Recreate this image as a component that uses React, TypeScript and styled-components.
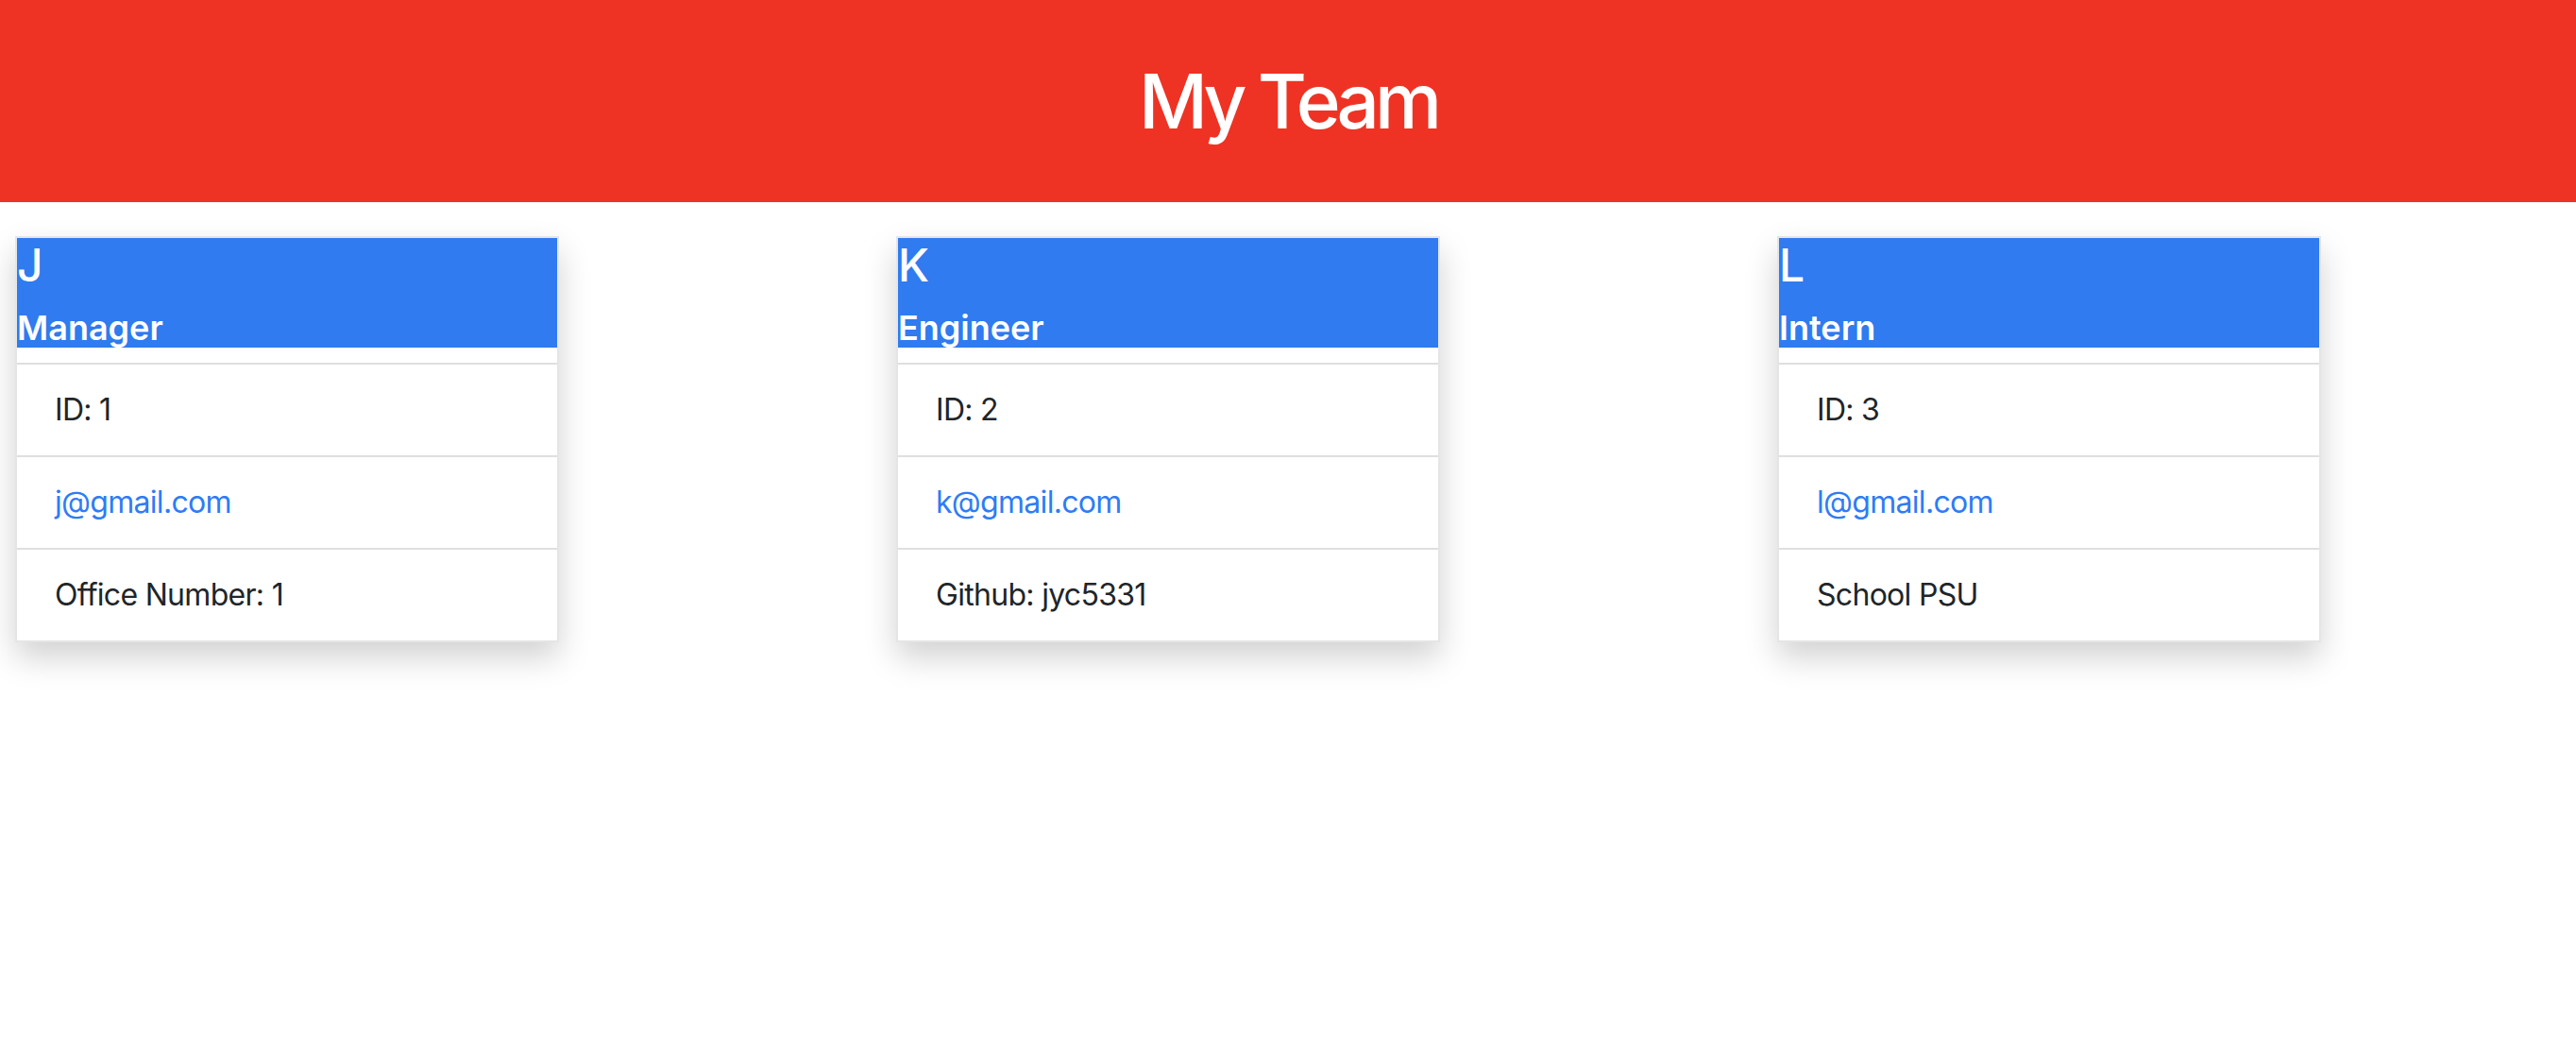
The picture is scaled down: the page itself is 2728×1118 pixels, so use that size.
import React from "react";
import styled, { createGlobalStyle } from "styled-components";

const GlobalStyle = createGlobalStyle`
  html, body {
    margin: 0;
    padding: 0;
    background: #ffffff;
  }
  body {
    font-family: Inter, "Noto Sans", "Liberation Sans", sans-serif;
    color: #212529;
  }
  * { box-sizing: border-box; }
`;

const Banner = styled.header`
  height: 214px;
  background: #ee3324;
  display: flex;
  align-items: center;
  justify-content: center;
`;

const Title = styled.h1`
  margin: 0;
  color: #ffffff;
  font-size: 80px;
  line-height: 96px;
  font-weight: 500;
  letter-spacing: -5px;
`;

const CardRow = styled.main`
  display: flex;
  align-items: flex-start;
  gap: 357px;
  padding: 36px 0 80px 16px;
`;

const Card = styled.section`
  width: 576px;
  background: #ffffff;
  border: 2px solid rgba(0, 0, 0, 0.1);
  box-shadow: 0 16px 32px rgba(0, 0, 0, 0.18);
  display: flex;
  flex-direction: column;
`;

const CardHeader = styled.div`
  background: #2f7bef;
  color: #ffffff;
  display: flex;
  flex-direction: column;
`;

const Name = styled.h2`
  margin: 0 0 16px;
  font-size: 48px;
  line-height: 58px;
  font-weight: 500;
`;

const Role = styled.h3`
  margin: 0;
  font-size: 36px;
  line-height: 42px;
  font-weight: 600;
  letter-spacing: 0;
`;

const Spacer = styled.div`
  height: 16px;
`;

const InfoList = styled.ul`
  list-style: none;
  margin: 0;
  padding: 0;
`;

const InfoItem = styled.li`
  border-top: 2px solid #dfdfdf;
  padding: 24px 40px;
  font-size: 32px;
  line-height: 48px;
  font-weight: 400;
  letter-spacing: -0.7px;
  color: #212529;
`;

const Mail = styled.a`
  color: #2e7cf6;
  text-decoration: none;
`;

type Member = {
  name: string;
  role: string;
  id: number;
  email: string;
  extra: string;
};

const team: Member[] = [
  { name: "J", role: "Manager", id: 1, email: "j@gmail.com", extra: "Office Number: 1" },
  { name: "K", role: "Engineer", id: 2, email: "k@gmail.com", extra: "Github: jyc5331" },
  { name: "L", role: "Intern", id: 3, email: "l@gmail.com", extra: "School PSU" },
];

export default function App() {
  return (
    <>
      <GlobalStyle />
      <Banner>
        <Title>My Team</Title>
      </Banner>
      <CardRow>
        {team.map((m) => (
          <Card key={m.id}>
            <CardHeader>
              <Name>{m.name}</Name>
              <Role>{m.role}</Role>
            </CardHeader>
            <Spacer />
            <InfoList>
              <InfoItem>ID: {m.id}</InfoItem>
              <InfoItem>
                <Mail href={`mailto:${m.email}`}>{m.email}</Mail>
              </InfoItem>
              <InfoItem>{m.extra}</InfoItem>
            </InfoList>
          </Card>
        ))}
      </CardRow>
    </>
  );
}
